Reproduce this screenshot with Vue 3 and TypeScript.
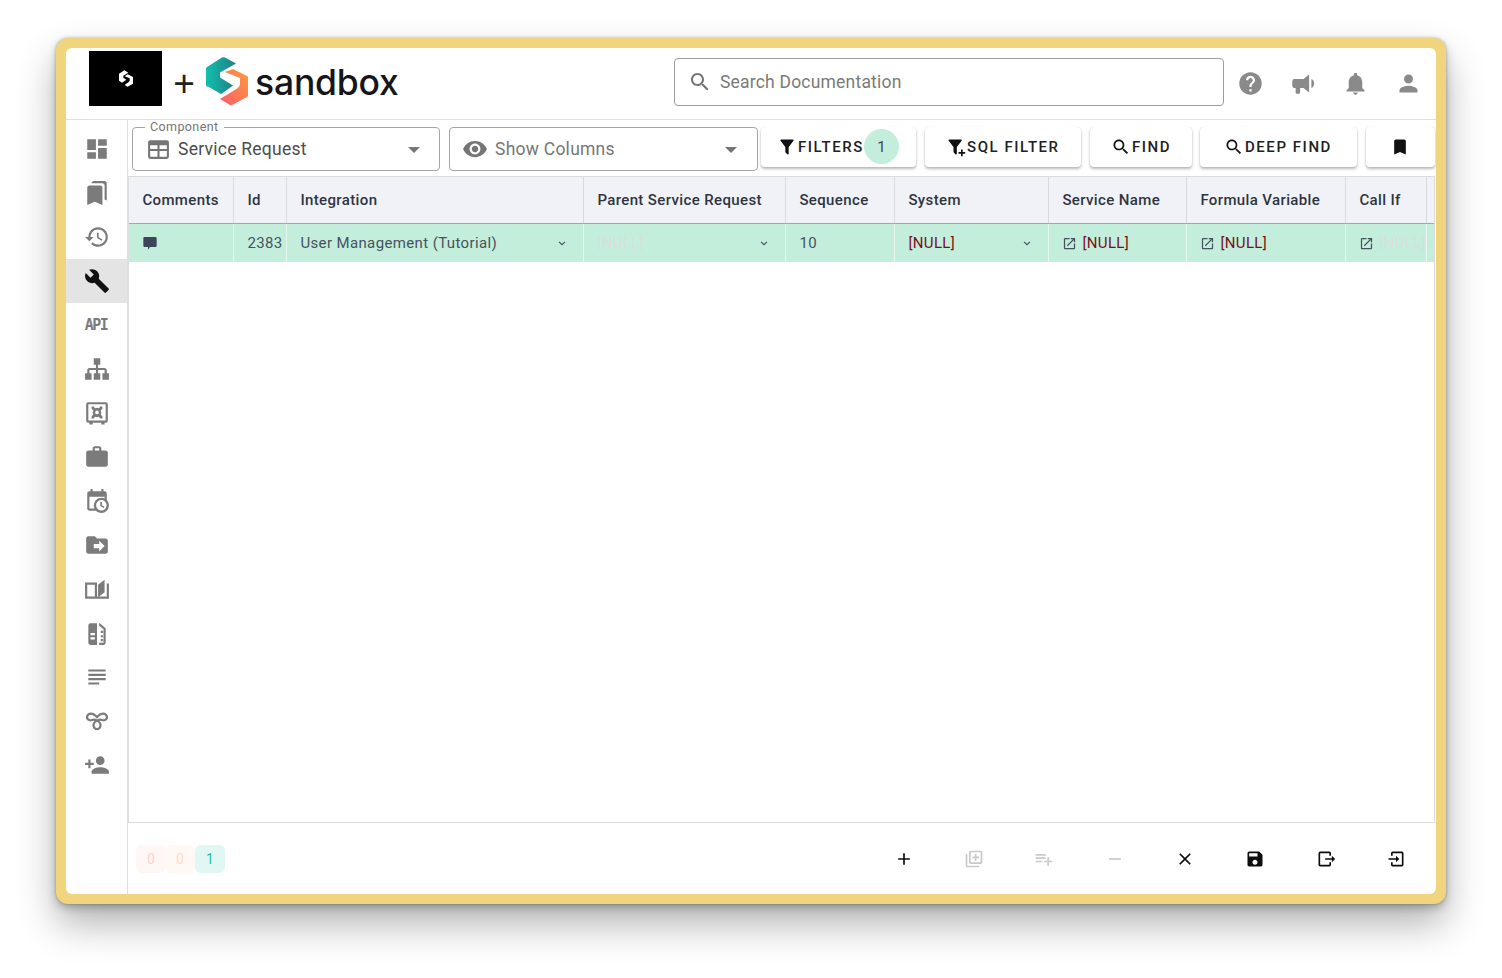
<script setup lang="ts">
const P = {
  dashboard: 'M3 13h8V3H3v10zm0 8h8v-6H3v6zm10 0h8V11h-8v10zm0-18v6h8V3h-8z',
  bookmarks: 'M19 18l2 1V3c0-1.1-.9-2-2-2H8.99C7.89 1 7 1.9 7 3h10c1.1 0 2 .9 2 2v13zM15 5H5c-1.1 0-2 .9-2 2v16l7-3 7 3V7c0-1.1-.9-2-2-2z',
  history: 'M13 3c-4.97 0-9 4.03-9 9H1l3.89 3.89.07.14L9 12H6c0-3.87 3.13-7 7-7s7 3.13 7 7-3.13 7-7 7c-1.93 0-3.68-.79-4.94-2.06l-1.42 1.42C8.27 19.99 10.51 21 13 21c4.97 0 9-4.03 9-9s-4.03-9-9-9zm-1 5v5l4.28 2.54.72-1.21-3.5-2.08V8H12z',
  build: 'M22.7 19l-9.1-9.1c.9-2.3.4-5-1.5-6.9-2-2-5-2.4-7.4-1.3L9 6 6 9 1.6 4.7C.4 7.1.9 10.1 2.9 12.1c1.9 1.9 4.6 2.4 6.9 1.5l9.1 9.1c.4.4 1 .4 1.4 0l2.3-2.3c.5-.4.5-1.1.1-1.4z',
  sitemap: 'M9 2v6h2v3H5c-1.11 0-2 .89-2 2v3H1v6h6v-6H5v-3h6v3H9v6h6v-6h-2v-3h6v3h-2v6h6v-6h-2v-3c0-1.11-.9-2-2-2h-6V8h2V2H9z',
  safe: 'M4 2h16a2 2 0 0 1 2 2v15a2 2 0 0 1-2 2h-1v1.500h-3V21H8v1.500H5V21H4a2 2 0 0 1-2-2V4a2 2 0 0 1 2-2zm0 2v15h16V4H4zm3 2h2l1.200 1.600a4 4 0 0 1 3.600 0L15 6h2v2l-1.600 1.600a4 4 0 0 1 0 3.800L17 15v2h-2l-1.200-1.600a4 4 0 0 1-3.600 0L9 17H7v-2l1.600-1.600a4 4 0 0 1 0-3.800L7 8V6zm5 3.800a1.700 1.700 0 1 0 0 3.400 1.700 1.700 0 0 0 0-3.400z',
  work: 'M20 6h-4V4c0-1.11-.89-2-2-2h-4c-1.11 0-2 .89-2 2v2H4c-1.11 0-1.99.89-1.99 2L2 19c0 1.11.89 2 2 2h16c1.11 0 2-.89 2-2V8c0-1.11-.89-2-2-2zm-6 0h-4V4h4v2z',
  calendar: 'M15 13h1.5v2.82l2.44 1.41-.75 1.3L15 16.69V13m4-5H5v11h4.67C9.24 18.09 9 17.07 9 16a7 7 0 0 1 7-7c1.07 0 2.09.24 3 .67V8M5 21c-1.11 0-2-.9-2-2V5c0-1.11.89-2 2-2h1V1h2v2h8V1h2v2h1a2 2 0 0 1 2 2v6.1c1.24 1.26 2 2.99 2 4.9a7 7 0 0 1-7 7c-1.91 0-3.64-.76-4.9-2H5m11-9.85A4.85 4.85 0 0 0 11.15 16c0 2.68 2.17 4.85 4.85 4.85A4.85 4.85 0 0 0 20.85 16c0-2.68-2.17-4.85-4.85-4.85z',
  move: 'M20 6h-8l-2-2H4c-1.1 0-1.99.9-1.99 2L2 18c0 1.1.9 2 2 2h16c1.1 0 2-.9 2-2V8c0-1.1-.9-2-2-2zm-6 12v-3H9v-4h5V8l5 5-5 5z',
  book: 'M1 6h11v15H1zm2 2v11h7V8H3zM13 8l6-4.500V15l-6 4.500V8zM21 7h2v14H12v-2h9V7z',
  doc: 'M4 5a2 2 0 0 1 2-2h6v20H6a2 2 0 0 1-2-2V5zm2 7v2h4v-2H6zm0 4v2h4v-2H6zM14 2.500l6 5V21a2 2 0 0 1-2 2h-4v-2h4V8.500l-4-3.300V2.500zM15.500 10v2h2v-2h-2zm0 4v2h2v-2h-2zm0 3.500v2h2v-2h-2z',
  subject: 'M14 17H4v2h10v-2zm6-8H4v2h16V9zM4 15h16v-2H4v2zM4 5v2h16V5H4z',
  personAdd: 'M15 12c2.210 0 4-1.790 4-4s-1.790-4-4-4-4 1.790-4 4 1.790 4 4 4zm-9-2V7H4v3H1v2h3v3h2v-3h3v-2H6zm9 4c-2.670 0-8 1.340-8 4v2h16v-2c0-2.660-5.330-4-8-4z',
  help: 'M12 2C6.480 2 2 6.480 2 12s4.480 10 10 10 10-4.480 10-10S17.520 2 12 2zm1 17h-2v-2h2v2zm2.070-7.750l-.9.920C13.450 12.900 13 13.500 13 15h-2v-.5c0-1.100.450-2.100 1.170-2.830l1.240-1.260c.370-.360.590-.860.590-1.410 0-1.100-.9-2-2-2s-2 .9-2 2H8c0-2.210 1.790-4 4-4s4 1.790 4 4c0 .880-.360 1.680-.93 2.250z',
  bullhorn: 'M12 8H4a2 2 0 0 0-2 2v4a2 2 0 0 0 2 2h1v4a1 1 0 0 0 1 1h2a1 1 0 0 0 1-1v-4h3l5 4V4l-5 4zm9.500 4c0 1.710-.96 3.260-2.500 4V8c1.530.75 2.500 2.300 2.500 4z',
  bell: 'M12 22c1.100 0 2-.9 2-2h-4c0 1.100.89 2 2 2zm6-6v-5c0-3.070-1.640-5.640-4.500-6.320V4c0-.83-.67-1.500-1.500-1.500s-1.500.67-1.500 1.500v.68C7.630 5.360 6 7.920 6 11v5l-2 2v1h16v-1l-2-2z',
  person: 'M12 12c2.210 0 4-1.790 4-4s-1.790-4-4-4-4 1.790-4 4 1.790 4 4 4zm0 2c-2.670 0-8 1.340-8 4v2h16v-2c0-2.660-5.330-4-8-4z',
  search: 'M15.500 14h-.79l-.28-.27C15.410 12.590 16 11.110 16 9.500 16 5.910 13.090 3 9.500 3S3 5.910 3 9.500 5.910 16 9.500 16c1.610 0 3.090-.59 4.230-1.570l.27.28v.79l5 4.990L20.490 19l-4.990-5zm-6 0C7.010 14 5 11.990 5 9.500S7.010 5 9.500 5 14 7.010 14 9.500 11.990 14 9.500 14z',
  table: 'M4 3h16a2 2 0 0 1 2 2v14a2 2 0 0 1-2 2H4a2 2 0 0 1-2-2V5a2 2 0 0 1 2-2zm0 5v3.500h7V8H4zm9 0v3.500h7V8h-7zm-9 5.500V19h7v-5.500H4zm9 0V19h7v-5.500h-7z',
  eye: 'M12 4.500C7 4.500 2.730 7.610 1 12c1.730 4.390 6 7.500 11 7.500s9.270-3.110 11-7.500c-1.730-4.390-6-7.500-11-7.500zM12 17c-2.760 0-5-2.240-5-5s2.240-5 5-5 5 2.240 5 5-2.240 5-5 5zm0-8c-1.660 0-3 1.340-3 3s1.340 3 3 3 3-1.340 3-3-1.340-3-3-3z',
  filter: 'M14 12v7.880c.04.3-.06.62-.29.83-.39.39-1.020.39-1.410 0l-2.010-2.010c-.23-.23-.33-.54-.29-.83V12h-.03L4.210 4.620c-.34-.43-.26-1.060.17-1.400C4.570 3.080 4.780 3 5 3h14c.22 0 .43.08.62.22.43.34.51.97.17 1.400L14.030 12H14z',
  filterPlus: 'M13 12v7.880c.04.3-.06.62-.29.83-.39.39-1.020.39-1.410 0L9.290 18.700c-.23-.23-.33-.54-.29-.83V12h-.03L3.210 4.620c-.34-.43-.26-1.060.17-1.400C3.570 3.080 3.780 3 4 3h14c.22 0 .43.08.62.22.43.34.51.97.17 1.400L13.030 12H13zM18 15h2v3h3v2h-3v3h-2v-3h-3v-2h3v-3z',
  bookmark: 'M17 3H7c-1.100 0-1.990.9-1.990 2L5 21l7-3 7 3V5c0-1.100-.9-2-2-2z',
  comment: 'M4 3h16a2 2 0 0 1 2 2v11a2 2 0 0 1-2 2h-8l-3 4v-4H4a2 2 0 0 1-2-2V5a2 2 0 0 1 2-2z',
  open: 'M19 19H5V5h7V3H5c-1.110 0-2 .9-2 2v14c0 1.100.89 2 2 2h14c1.100 0 2-.9 2-2v-7h-2v7zM14 3v2h3.590l-9.830 9.830 1.410 1.410L19 6.410V10h2V3h-7z',
  plus: 'M19 13h-6v6h-2v-6H5v-2h6V5h2v6h6v2z',
  library: 'M4 6H2v14c0 1.100.9 2 2 2h14v-2H4V6zm16-4H8c-1.100 0-2 .9-2 2v12c0 1.100.9 2 2 2h12c1.100 0 2-.9 2-2V4c0-1.100-.9-2-2-2zm0 14H8V4h12v12zm-7-2h2v-3h3V9h-3V6h-2v3h-3v2h3z',
  playlist: 'M14 10H2v2h12v-2zm0-4H2v2h12V6zm4 8v-4h-2v4h-4v2h4v4h2v-4h4v-2h-4zM2 16h8v-2H2v2z',
  remove: 'M19 13H5v-2h14v2z',
  close: 'M19 6.410L17.590 5 12 10.590 6.410 5 5 6.410 10.590 12 5 17.590 6.410 19 12 13.410 17.590 19 19 17.590 13.410 12z',
  save: 'M17 3H5c-1.110 0-2 .9-2 2v14c0 1.100.89 2 2 2h14c1.100 0 2-.9 2-2V7l-4-4zm-5 16c-1.660 0-3-1.340-3-3s1.340-3 3-3 3 1.340 3 3-1.340 3-3 3zm3-10H5V5h10v4z',
  exportBox: 'M5 3h11a2 2 0 0 1 2 2v3h-2V5H5v14h11v-3h2v3a2 2 0 0 1-2 2H5a2 2 0 0 1-2-2V5a2 2 0 0 1 2-2zm14 5 4 4-4 4v-3h-8v-2h8V8z',
  importBox: 'M8 3h11a2 2 0 0 1 2 2v14a2 2 0 0 1-2 2H8a2 2 0 0 1-2-2v-3h2v3h11V5H8v3H6V5a2 2 0 0 1 2-2zm4 5 4 4-4 4v-3H3v-2h9V8z',
}

type Nav = { d?: string; active?: boolean; api?: boolean; loop?: boolean }
const nav: Nav[] = [
  { d: P.dashboard }, { d: P.bookmarks }, { d: P.history }, { d: P.build, active: true }, { api: true },
  { d: P.sitemap }, { d: P.safe }, { d: P.work }, { d: P.calendar }, { d: P.move }, { d: P.book }, { d: P.doc },
  { d: P.subject }, { loop: true }, { d: P.personAdd },
]

const headerIcons = [P.help, P.bullhorn, P.bell, P.person]

const widths = [105, 53, 297, 202, 109, 154, 138, 159, 81, 7]
const gridColumns = widths.map((w) => `${w}px`).join(' ')
const columns = ['Comments', 'Id', 'Integration', 'Parent Service Request', 'Sequence', 'System', 'Service Name', 'Formula Variable', 'Call If', '']

const bottomIcons = [
  { d: P.plus, off: false }, { d: P.library, off: true }, { d: P.playlist, off: true }, { d: P.remove, off: true },
  { d: P.close, off: false }, { d: P.save, off: false }, { d: P.exportBox, off: false }, { d: P.importBox, off: false },
]
</script>

<template>
  <div class="page">
    <div class="frame">
      <div class="window">
        <header class="top">
          <div class="brand">
            <div class="blackbox">
              <svg class="minimark" viewBox="0 0 42 49">
                <path fill="#fff" d="M16 0 0 10v21l9 6 13-9-9-6v-6l15-9z" />
                <path fill="#fff" d="m26 12 16 8v20L26 49l-9-5 13-10 2-3V24l-15-6z" />
              </svg>
            </div>
            <span class="plus">+</span>
            <svg class="mark" viewBox="0 0 42 49">
              <defs>
                <linearGradient id="lt" x1="0" y1="0" x2="1" y2="0">
                  <stop offset="0" stop-color="#12bfae" />
                  <stop offset="1" stop-color="#1f7f86" />
                </linearGradient>
                <linearGradient id="rt" x1="0" y1="1" x2="1" y2="0">
                  <stop offset="0" stop-color="#fb5c6b" />
                  <stop offset="1" stop-color="#ff9a3c" />
                </linearGradient>
              </defs>
              <path fill="url(#lt)" d="M16 .6a3 3 0 0 1 3 0l11 6-16 9v5l13 8-11 8a2 2 0 0 1-2 0l-12-7a2 2 0 0 1-2-3V12a2 2 0 0 1 1-2z" />
              <path fill="url(#rt)" d="m27 12 14 7a2 2 0 0 1 1 2v17a2 2 0 0 1-1 2l-15 8a2 2 0 0 1-2 0l-10-6 18-11 2-3v-7l-15-6z" />
            </svg>
            <span class="wordmark">sandbox</span>
          </div>
          <div class="search">
            <svg class="searchicon" viewBox="0 0 24 24"><path :d="P.search" /></svg>
            <span>Search Documentation</span>
          </div>
          <div class="topicons">
            <svg v-for="(d, i) in headerIcons" :key="i" viewBox="0 0 24 24"><path :d="d" /></svg>
          </div>
        </header>

        <div class="body">
          <nav class="side">
            <div v-for="(n, i) in nav" :key="i" class="navitem" :class="{ active: n.active }">
              <span v-if="n.api" class="api">API</span>
              <svg v-else-if="n.loop" class="loop" viewBox="0 2 24 24">
                <path d="M10.500 9C8 6.500 4 6.500 3 9.500 2 12.500 5 14 7.500 13c2.500-1 6.500 1 7.500 3.500 1 3-1 5-3 5s-4-2-3-5c1-2.500 5-4.500 7.500-3.500 2.500 1 5.500-.5 4.500-3.500-1-3-5-3-7.500-.5L12 10.500 10.500 9z" />
              </svg>
              <svg v-else viewBox="0 0 24 24"><path :d="n.d" /></svg>
            </div>
          </nav>

          <main class="main">
            <div class="toolbar">
              <div class="select sel-a">
                <span class="legend">Component</span>
                <svg class="selicon" viewBox="0 0 24 24"><path fill-rule="evenodd" :d="P.table" /></svg>
                <span class="seltext">Service Request</span>
                <span class="caret"></span>
              </div>
              <div class="select sel-b">
                <svg class="eyeicon" viewBox="0 0 24 24"><path :d="P.eye" /></svg>
                <span class="seltext muted">Show Columns</span>
                <span class="caret"></span>
              </div>
              <button class="btn b-filters">
                <svg viewBox="0 0 24 24"><path :d="P.filter" /></svg>FILTERS
                <span class="count">1</span>
              </button>
              <button class="btn b-sql"><svg viewBox="0 0 24 24"><path :d="P.filterPlus" /></svg>SQL FILTER</button>
              <button class="btn b-find"><svg viewBox="0 0 24 24"><path :d="P.search" /></svg>FIND</button>
              <button class="btn b-deep"><svg viewBox="0 0 24 24"><path :d="P.search" /></svg>DEEP FIND</button>
              <button class="btn b-mark"><svg viewBox="0 0 24 24"><path :d="P.bookmark" /></svg></button>
            </div>

            <div class="tablebox">
              <div class="thead" :style="{ gridTemplateColumns: gridColumns }">
                <div v-for="(c, i) in columns" :key="i" class="th">{{ c }}</div>
              </div>
              <div class="trow" :style="{ gridTemplateColumns: gridColumns }">
                <div class="td"><svg class="cmt" viewBox="0 0 24 24"><path :d="P.comment" /></svg></div>
                <div class="td">2383</div>
                <div class="td between">User Management (Tutorial)<svg class="chev" viewBox="0 0 24 24"><path d="M7 10l5 5 5-5" /></svg></div>
                <div class="td between"><span class="nullfaint">[NULL]</span><svg class="chev" viewBox="0 0 24 24"><path d="M7 10l5 5 5-5" /></svg></div>
                <div class="td">10</div>
                <div class="td between"><span class="nullred">[NULL]</span><svg class="chev" viewBox="0 0 24 24"><path d="M7 10l5 5 5-5" /></svg></div>
                <div class="td"><svg class="ext" viewBox="0 0 24 24"><path :d="P.open" /></svg><span class="nullred">[NULL]</span></div>
                <div class="td"><svg class="ext" viewBox="0 0 24 24"><path :d="P.open" /></svg><span class="nullred">[NULL]</span></div>
                <div class="td"><svg class="ext" viewBox="0 0 24 24"><path :d="P.open" /></svg><span class="nullfaint">[NULL]</span></div>
                <div class="td"></div>
              </div>
            </div>

            <footer class="bottom">
              <div class="badges">
                <span class="bdg red">0</span>
                <span class="bdg orange">0</span>
                <span class="bdg teal">1</span>
              </div>
              <div class="actions">
                <span v-for="(b, i) in bottomIcons" :key="i" class="action" :class="{ off: b.off }">
                  <svg viewBox="0 0 24 24"><path :d="b.d" /></svg>
                </span>
              </div>
            </footer>
          </main>
        </div>
      </div>
    </div>
  </div>
</template>

<style>
html, body { margin: 0; background: #fff; }
</style>

<style scoped>
.page {
  width: 1502px;
  height: 978px;
  box-sizing: border-box;
  padding: 38px 56px 74px;
  font-family: Roboto, "Liberation Sans", sans-serif;
  overflow: hidden;
}
.frame {
  height: 100%;
  box-sizing: border-box;
  padding: 10px;
  background: #f1d57e;
  border-radius: 12px;
  box-shadow: 0 20px 38px rgba(0, 0, 0, 0.3), 0 4px 8px rgba(0, 0, 0, 0.22), 0 0 3px rgba(0, 0, 0, 0.25);
}
.window {
  height: 100%;
  background: #fff;
  border-radius: 6px;
  display: flex;
  flex-direction: column;
  overflow: hidden;
}
.top {
  height: 72px;
  flex: none;
  box-sizing: border-box;
  border-bottom: 1px solid #e0e0e0;
  display: flex;
  align-items: flex-start;
}
.brand { display: flex; align-items: flex-start; margin-left: 23px; margin-top: 3px; width: 585px; }
.blackbox { width: 73px; height: 55px; background: #000; display: flex; align-items: center; justify-content: center; }
.minimark { width: 14px; height: 17px; }
.plus { font: 300 37px/1 "Liberation Sans", sans-serif; color: #222; width: 44px; text-align: center; margin-top: 14px; }
.mark { width: 42px; height: 49px; margin-top: 6px; flex: none; }
.wordmark { font: 500 35.500px/1 Inter, sans-serif; color: #15151a; margin-left: 7px; margin-top: 14px; letter-spacing: -0.2px; }
.search {
  width: 550px;
  height: 48px;
  margin-top: 10px;
  box-sizing: border-box;
  border: 1px solid #9c9c9c;
  border-radius: 4px;
  display: flex;
  align-items: center;
  padding-left: 13px;
  color: #7a7a7a;
  font-size: 17.5px;
  letter-spacing: 0.2px;
}
.searchicon { width: 24px; height: 24px; fill: #757575; margin-right: 8px; }
.topicons { display: flex; align-items: center; gap: 25.700px; margin-left: 13px; margin-top: 23px; height: 24px; }
.topicons svg { width: 27px; height: 27px; fill: #8a8a8a; }
.body { flex: 1; display: flex; min-height: 0; }
.side { width: 62px; flex: none; box-sizing: border-box; border-right: 1px solid #dcdee2; padding-top: 7px; }
.navitem { height: 44px; display: flex; align-items: center; justify-content: center; }
.navitem svg { width: 26px; height: 26px; fill: #7b7b7b; }
.navitem svg.loop { fill: none; stroke: #7b7b7b; stroke-width: 2; }
.navitem.active { background: #e4e4e4; }
.navitem.active svg { fill: #111; }
.api { font: 700 15px/1 "DejaVu Sans Mono", monospace; color: #7b7b7b; letter-spacing: -1.500px; margin-left: -1px; margin-top: 1px; }
.main { flex: 1; min-width: 0; display: flex; flex-direction: column; }
.toolbar { height: 56px; flex: none; box-sizing: border-box; padding: 7px 0 0 4px; display: flex; align-items: flex-start; }
.select {
  position: relative;
  height: 44px;
  box-sizing: border-box;
  border: 1px solid #a5a5a5;
  border-radius: 4px;
  display: flex;
  align-items: center;
}
.sel-a { width: 308px; margin-right: 9px; padding-left: 13px; }
.sel-a .caret { right: 19px; }
.sel-b { width: 309px; margin-right: 3px; padding-left: 12px; }
.legend {
  position: absolute;
  left: 12px;
  top: -8px;
  background: #fff;
  padding: 0 5px;
  font-size: 12.5px;
  line-height: 14px;
  color: #757575;
  letter-spacing: 0.4px;
}
.selicon { width: 25px; height: 25px; fill: #757575; margin-right: 7px; }
.eyeicon { width: 26px; height: 26px; fill: #757575; margin-right: 7px; }
.seltext { font-size: 17.500px; color: #4d4d4d; letter-spacing: 0.25px; }
.seltext.muted { color: #777; }
.caret {
  position: absolute;
  right: 20px;
  top: 19px;
  border-left: 6px solid transparent;
  border-right: 6px solid transparent;
  border-top: 6px solid #757575;
}
.btn {
  position: relative;
  height: 40px;
  box-sizing: border-box;
  border: 0;
  border-radius: 4px;
  background: #fff;
  box-shadow: 0 2px 3px rgba(0, 0, 0, 0.28), 0 0 1px rgba(0, 0, 0, 0.14);
  display: flex;
  align-items: center;
  padding: 0;
  font-family: Roboto, sans-serif;
  font-weight: 500;
  font-size: 15px;
  letter-spacing: 1.550px;
  color: #222;
}
.btn svg { width: 20px; height: 20px; flex: none; fill: #111; margin-right: 1px; }
.b-filters { width: 155px; margin-right: 9px; padding-left: 16px; }
.b-sql { width: 156px; margin-right: 9px; padding-left: 21px; }
.b-find { width: 102px; margin-right: 8px; padding-left: 21px; }
.b-deep { width: 157px; margin-right: 9px; padding-left: 24px; }
.b-mark { width: 69px; justify-content: center; }
.count {
  position: absolute;
  left: 103px;
  top: 2px;
  width: 35px;
  height: 35px;
  border-radius: 50%;
  background: #c3eedb;
  display: flex;
  align-items: center;
  justify-content: center;
  font-weight: 400;
  letter-spacing: 0;
  color: #444;
}
.tablebox {
  flex: 1;
  min-height: 0;
  border: 1px solid #dcdcdc;
  box-sizing: border-box;
  width: 1307px;
  border-left-color: #dcdee2;
}
.thead { display: grid; height: 47px; background: #f0f2f8; border-bottom: 1px solid #6cbad6; box-sizing: border-box; }
.th {
  display: flex;
  align-items: center;
  padding-left: 13.400px;
  box-sizing: border-box;
  border-right: 1px solid #d6d9e0;
  font-size: 15px;
  font-weight: 500;
  letter-spacing: 0.37px;
  color: #2f3540;
  white-space: nowrap;
}
.th:last-child { border-right: 0; padding: 0; }
.trow { display: grid; height: 38px; background: #c3eedb; }
.td {
  display: flex;
  align-items: center;
  padding-left: 13.400px;
  box-sizing: border-box;
  border-right: 1px solid #e4f6ed;
  font-size: 15px;
  letter-spacing: 0.37px;
  color: #47525f;
  white-space: nowrap;
  overflow: hidden;
}
.td:last-child { border-right: 0; padding: 0; }
.between { justify-content: space-between; padding-right: 14px; }
.cmt { width: 16px; height: 16px; fill: #3c4658; }
.chev { width: 14px; height: 14px; fill: none; stroke: #47525f; stroke-width: 2; flex: none; }
.ext { width: 15px; height: 15px; fill: #47525f; margin-right: 5px; flex: none; }
.nullred { color: #7a0f1c; }
.nullfaint { color: #d9dfdf; }
.bottom { height: 71px; flex: none; display: flex; align-items: center; justify-content: space-between; padding-left: 8px; }
.badges { display: flex; }
.bdg {
  width: 30px;
  height: 28px;
  display: flex;
  align-items: center;
  justify-content: center;
  font-size: 14px;
  border-radius: 6px;
}
.red { background: #fff6f6; color: #ffd0d4; }
.orange { background: #fff8f3; color: #ffdcc6; margin-left: -1px; }
.teal { background: #e0f7f3; color: #1fc1a6; }
.actions { display: flex; margin-right: 5px; }
.action { width: 70.300px; display: flex; justify-content: center; align-items: center; }
.action svg { width: 20px; height: 20px; fill: #0d0d0d; }
.action.off svg { fill: #c9c9c9; }
</style>
